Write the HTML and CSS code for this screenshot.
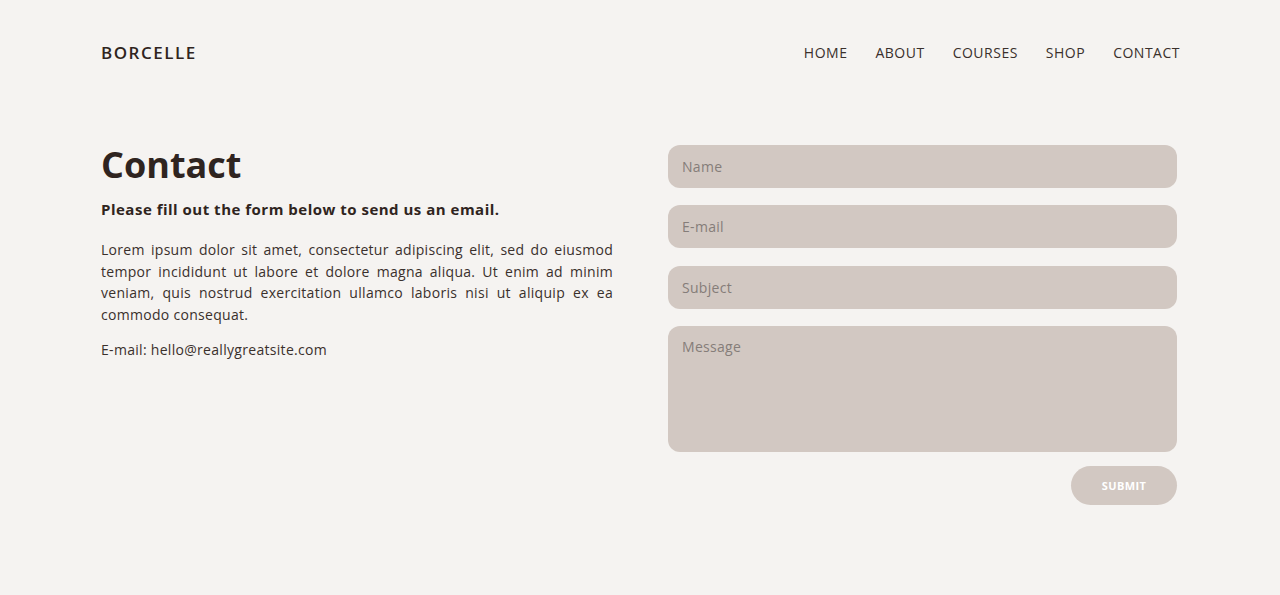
FILE: index.html
```html
<!DOCTYPE html>
<html lang="en">
<head>
<meta charset="utf-8">
<title>Borcelle - Contact</title>
<link rel="stylesheet" href="styles.css">
</head>
<body>
<div class="page">
  <header class="header">
    <div class="logo">BORCELLE</div>
    <nav class="nav">
      <a href="#">HOME</a>
      <a href="#">ABOUT</a>
      <a href="#">COURSES</a>
      <a href="#">SHOP</a>
      <a href="#">CONTACT</a>
    </nav>
  </header>
  <main class="main">
    <section class="info">
      <h1 class="title">Contact</h1>
      <p class="lead">Please fill out the form below to send us an email.</p>
      <p class="text">Lorem ipsum dolor sit amet, consectetur adipiscing elit, sed do eiusmod tempor incididunt ut labore et dolore magna aliqua. Ut enim ad minim veniam, quis nostrud exercitation ullamco laboris nisi ut aliquip ex ea commodo consequat.</p>
      <p class="email">E-mail: hello@reallygreatsite.com</p>
    </section>
    <form class="form">
      <input class="field" type="text" placeholder="Name">
      <input class="field" type="text" placeholder="E-mail">
      <input class="field" type="text" placeholder="Subject">
      <textarea class="field area" placeholder="Message"></textarea>
      <div class="actions"><button class="submit" type="button">SUBMIT</button></div>
    </form>
  </main>
</div>
</body>
</html>
```
FILE: styles.css
```css
* { box-sizing: border-box; }
html, body { margin: 0; padding: 0; }
body {
  background: #f5f3f1;
  color: #2f2420;
  font-family: "Open Sans", "DejaVu Sans", sans-serif;
}
.page {
  width: 1079px;
  margin: 0 0 0 101px;
}
.header {
  display: flex;
  justify-content: space-between;
  align-items: center;
  height: 104px;
}
.logo {
  font-size: 17px;
  font-weight: 600;
  letter-spacing: 1.5px;
  color: #2f2420;
}
.nav {
  display: flex;
  gap: 28px;
}
.nav a {
  font-size: 14px;
  font-weight: 500;
  letter-spacing: 0.5px;
  color: #3a302c;
  text-decoration: none;
}
.main {
  display: flex;
  gap: 55px;
  padding-top: 41px;
}
.info {
  width: 512px;
  flex: none;
}
.title {
  margin: 0;
  font-size: 36px;
  font-weight: 700;
  line-height: 40px;
  letter-spacing: 0;
}
.lead {
  margin: 14px 0 0;
  font-size: 15px;
  font-weight: 700;
  line-height: 20px;
  letter-spacing: 0.5px;
}
.text {
  margin: 20px 0 0;
  font-size: 14px;
  line-height: 21.7px;
  text-align: justify;
  letter-spacing: 0.3px;
  color: #3a302c;
}
.email {
  margin: 13px 0 0;
  font-size: 14px;
  line-height: 21px;
  letter-spacing: 0.3px;
  color: #3a302c;
}
.form {
  width: 509px;
  display: flex;
  flex-direction: column;
  gap: 17.3px;
}
.field {
  display: block;
  width: 100%;
  height: 43px;
  border: none;
  border-radius: 12px;
  background: #d2c8c2;
  padding: 0 14px;
  font-family: inherit;
  font-size: 14px;
  letter-spacing: 0.3px;
  color: #3a302c;
  outline: none;
}
.field::placeholder { color: #857d79; }
.area {
  height: 126px;
  padding: 11px 14px;
  resize: none;
}
.actions {
  display: flex;
  justify-content: flex-end;
  margin-top: -3.3px;
}
.submit {
  width: 106px;
  height: 39px;
  border: none;
  border-radius: 20px;
  background: #d2c8c2;
  color: #ffffff;
  font-family: inherit;
  font-size: 11px;
  font-weight: 700;
  letter-spacing: 0.4px;
}
```
